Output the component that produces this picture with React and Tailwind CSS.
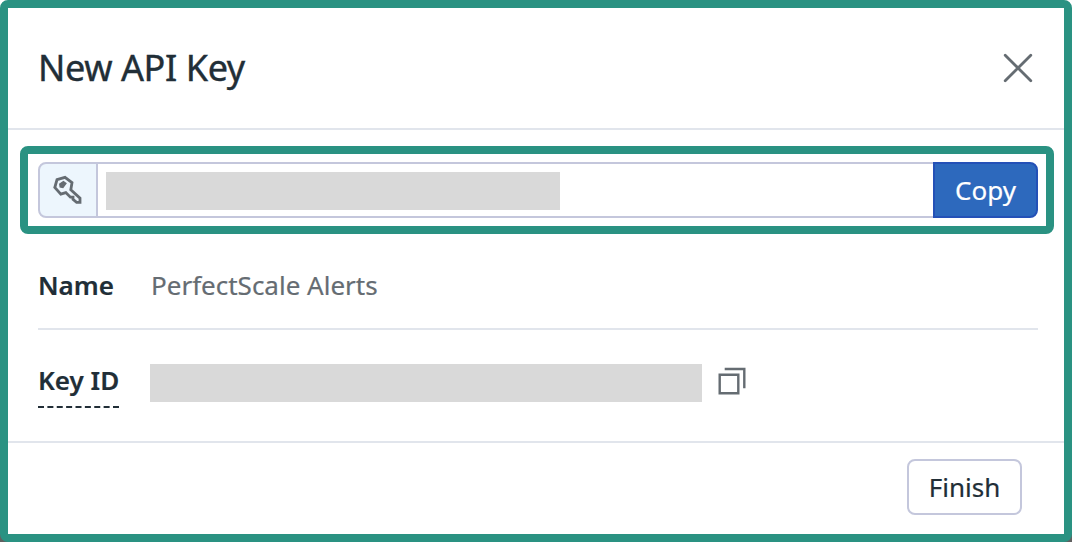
function CloseIcon() {
  return (
    <svg width="30" height="30" viewBox="0 0 30 30" fill="none" stroke="#656c72" strokeWidth="2.8" strokeLinecap="round">
      <path d="M2.2 2.2 27.8 27.8M27.8 2.2 2.2 27.8" />
    </svg>
  );
}

function KeyIcon() {
  return (
    <svg className="-mt-0.5" width="30" height="30" viewBox="0 0 30 30" fill="none" stroke="#656c72" strokeWidth="2.8">
      <path d="M4 5.6 12 3.3 19 8.7 17.8 15.8 27 24.2V28.3H23.6L20 25.4V23.2H17.4L12.8 18.6 7.8 20.1 1.8 13.5Z" />
      <path d="M6.8 10 10.4 7.6 12.9 9.4 9.9 13.4 7.2 12.8Z" fill="#656c72" stroke="#656c72" strokeWidth="1.4" />
    </svg>
  );
}

function CopyIcon() {
  return (
    <svg width="28" height="28" viewBox="0 0 28 28" fill="none" stroke="#656c72" strokeWidth="2.4">
      <path d="M1.7 7.7H20.3V26.3H1.7Z" />
      <path d="M6.7 2H26.3V21.3" />
    </svg>
  );
}

export default function App() {
  return (
    <div className="h-[542px] w-[1072px] bg-linear-to-b from-white from-50% to-[#606060] to-100%">
      <div className="flex h-full w-full flex-col rounded-lg border-8 border-[#2a9282] bg-white font-['Noto_Sans',sans-serif] text-[26px] leading-9 text-[#212e37] [-webkit-text-stroke:0.2px]">
        <header className="flex h-[122px] shrink-0 items-center justify-between border-b-2 border-[#e1e5ec] pr-[31px] pl-[30px]">
          <h1 className="text-[36px] leading-[48px] tracking-[-0.4px] [-webkit-text-stroke:0.4px]">New API Key</h1>
          <button aria-label="Close">
            <CloseIcon />
          </button>
        </header>

        <main className="h-[313px] shrink-0 border-b-2 border-[#e1e5ec] pt-4">
          <div className="mr-[10px] ml-3 h-22 rounded-lg border-8 border-[#2a9282] pt-2 pl-[10px]">
            <div className="flex h-14 w-[1000px]">
              <div className="flex w-[60px] items-center justify-center rounded-l-lg border-2 border-[#c4c7dc] bg-[#edf6fd]">
                <KeyIcon />
              </div>
              <div className="flex flex-1 items-center border-y-2 border-[#c4c7dc] pl-2">
                <div className="mt-0.5 h-[38px] w-[454px] bg-[#d9d9d9]" />
              </div>
              <button className="w-[105px] rounded-r-lg border-2 border-[#2451b7] bg-[#2d69bd] text-white">Copy</button>
            </div>
          </div>

          <div className="mr-[26px] ml-[30px] flex h-24 items-center border-b-2 border-[#e1e5ec] pt-[7px]">
            <div className="w-[113px] font-semibold">Name</div>
            <div className="text-[#656c72]">PerfectScale Alerts</div>
          </div>

          <div className="ml-[30px] flex items-start pt-8">
            <div className="w-28">
              <div className="h-[46px] w-[81px]">
                <div className="h-11 font-semibold whitespace-nowrap">Key ID</div>
                <svg className="block" width="81" height="2">
                  <path d="M0 1H81" stroke="#212e37" strokeWidth="2" strokeDasharray="6 3.375" />
                </svg>
              </div>
            </div>
            <div className="mt-0.5 h-[38px] w-[552px] bg-[#d9d9d9]" />
            <button className="mt-[5px] ml-4" aria-label="Copy key ID">
              <CopyIcon />
            </button>
          </div>
        </main>

        <footer className="flex flex-1 justify-end pt-4 pr-[42px]">
          <button className="h-14 w-[115px] rounded-lg border-2 border-[#c4c7dc]">Finish</button>
        </footer>
      </div>
    </div>
  );
}
